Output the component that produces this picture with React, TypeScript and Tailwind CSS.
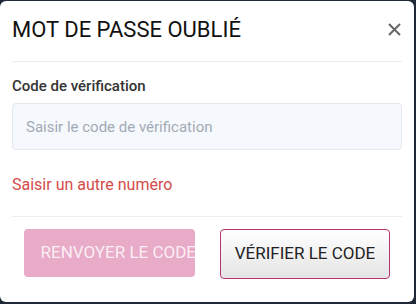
import React from "react";

export default function App() {
  return (
    <div
      className="w-[416px] h-[304px] bg-[#1e2836] overflow-hidden pt-[1px]"
      style={{ fontFamily: "Roboto, 'Liberation Sans', sans-serif" }}
    >
      <div className="w-[414px] h-[301px] bg-white rounded-[6px] px-[12px] flex flex-col">
        <div className="flex items-start justify-between pt-[15px] pb-[17px] border-b border-[#ebedf0]">
          <h1 className="text-[22px] leading-[28px] text-[#111] font-normal">MOT DE PASSE OUBLIÉ</h1>
          <button className="mt-[7px] mr-[1px] w-[13px] h-[13px] flex items-center justify-center">
            <svg width="13" height="13" viewBox="0 0 13 13">
              <path d="M1 1L12 12M12 1L1 12" stroke="#666" strokeWidth="2" strokeLinecap="butt" />
            </svg>
          </button>
        </div>
        <label className="mt-[14px] text-[15px] leading-[20px] font-medium text-[#333]">Code de vérification</label>
        <div className="mt-[7px] h-[47px] rounded-[4px] border border-[#e4e9f0] bg-[#f5f8fc] flex items-center pl-[13px]">
          <span className="text-[15px] text-[#a3aab5] leading-[18px]">Saisir le code de vérification</span>
        </div>
        <div className="mt-[23px] text-[16px] leading-[24px] text-[#d44a4a]">Saisir un autre numéro</div>
        <div className="mt-[19px] border-b border-[#ebedf0]" />
        <div className="flex items-start justify-between px-[12px] pt-[12px]">
          <button className="w-[171px] h-[48px] rounded-[4px] bg-[#e8abc8] text-[#fbeef4] text-[17px] pl-[16.5px] pr-0 whitespace-nowrap overflow-hidden text-left">
            RENVOYER LE CODE
          </button>
          <button className="w-[170px] h-[50px] rounded-[4px] border-[1.5px] border-[#b8366f] bg-gradient-to-b from-white to-[#e4e4e4] text-[#222] text-[17px] whitespace-nowrap">
            VÉRIFIER LE CODE
          </button>
        </div>
      </div>
    </div>
  );
}
